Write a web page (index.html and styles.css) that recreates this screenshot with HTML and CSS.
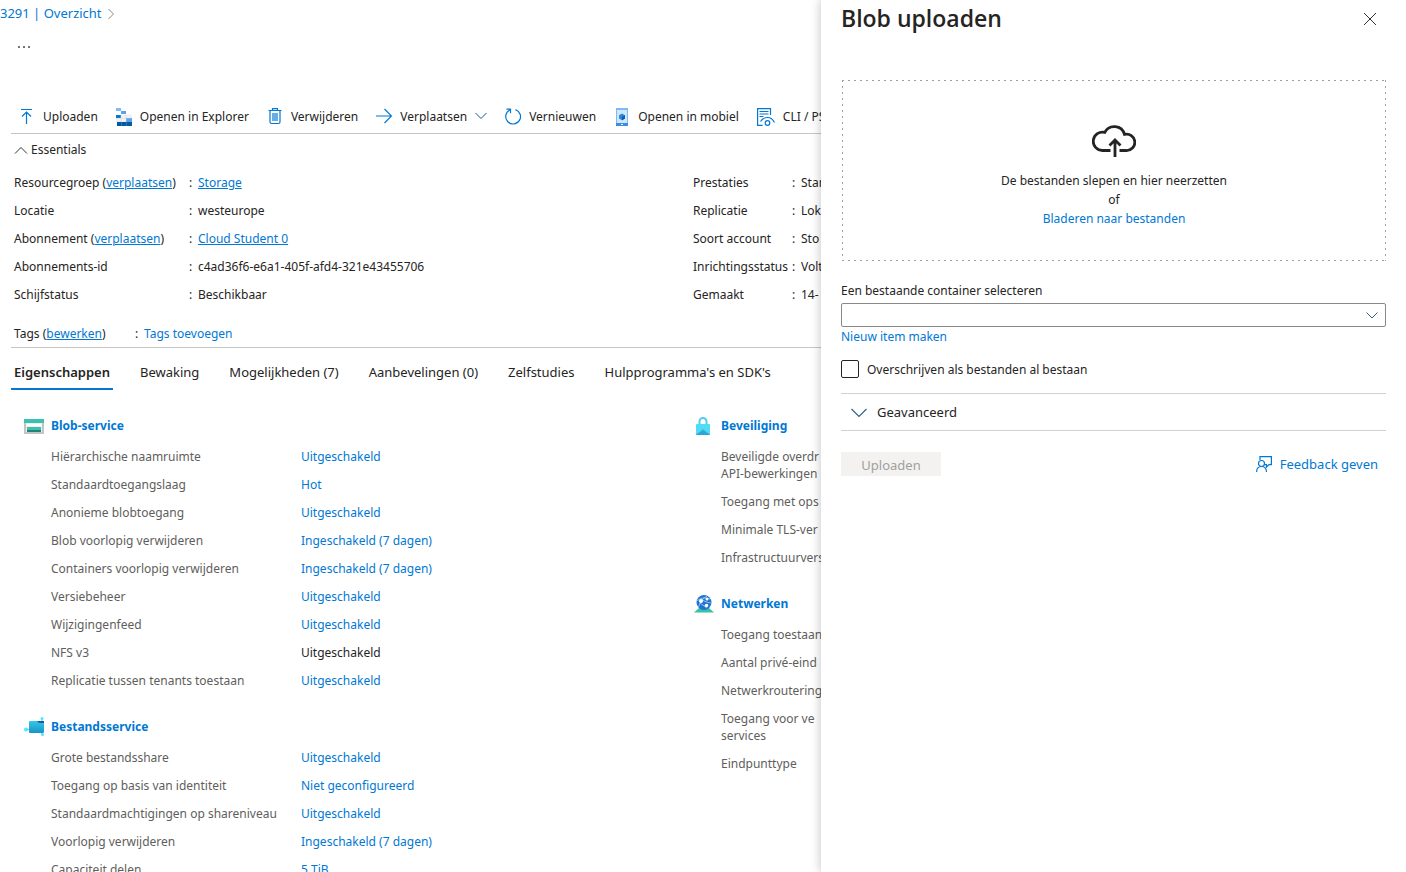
FILE: index.html
```html
<!DOCTYPE html>
<html lang="nl">
<head>
<meta charset="utf-8">
<title>Blob uploaden</title>
<link rel="stylesheet" href="styles.css">
</head>
<body>
<main class="blade">
  <nav class="breadcrumb" aria-label="Kruimelpad">
    <a href="#">3291 | Overzicht</a>
    <svg width="8" height="12" viewBox="0 0 8 12" fill="none" stroke="#8a8a8a"><path d="M.5 1l5 5-5 5"/></svg>
  </nav>
  <button class="more" type="button" aria-label="Meer">
    <svg width="14" height="4" viewBox="0 0 14 4" fill="#797775"><path d="M1 2h2v2H1zM6 2h2v2H6zM11 2h2v2h-2z"/></svg>
  </button>

  <div class="toolbar" role="toolbar">
    <button type="button"><svg class="icon" viewBox="0 0 16 18" fill="none" stroke="#0078d4"><path d="M2 1.500h11M7.500 16V4M3 8.500L7.500 4 12 8.500" stroke-width="1.2"/></svg>Uploaden</button>
    <button type="button"><svg class="icon" viewBox="0 0 16 18"><path fill="#83b9f9" d="M0 0h5v3H0z"/><path fill="#5ea0ef" d="M5 3h5v3H5zM10 10h6v4h-6z"/><path fill="#0078d4" d="M0 7h5v3H0z"/><path fill="#f2f2f2" stroke="#ddd" stroke-width=".5" d="M5 7h5v3H5zM10 7h5v3h-5zM0 10.500h5v3H0zM5 10.500h5v3H5z"/><path fill="#005ba1" d="M1 14h15v4H1z"/><path stroke="#3b8bc9" stroke-width=".6" d="M5.500 14v4M10.500 14v4"/></svg>Openen in Explorer</button>
    <button type="button"><svg class="icon" viewBox="0 0 16 18" fill="none" stroke="#0078d4" stroke-width="1.200"><path d="M1.500 2.500h13M5.500 2.500V.6h5v1.900M3 2.500V14q0 1.500 1.500 1.500h7q1.500 0 1.500-1.500V2.500M6 5v8M8 5v8M10 5v8"/></svg>Verwijderen</button>
    <button type="button"><svg class="icon" viewBox="0 0 16 18" fill="none" stroke="#0078d4" stroke-width="1.200"><path d="M0 8h15.500M8.500 1l7 7-7 7"/></svg>Verplaatsen<svg class="chevron" viewBox="0 0 12 8" fill="none" stroke="#0f5a9c"><path d="M.5 0L6 5.500 11.500 0"/></svg></button>
    <button type="button"><svg class="icon" viewBox="0 0 16 18" fill="none" stroke="#0078d4" stroke-width="1.200"><path d="M10.500 1.600A7.400 7.400 0 1 1 4.800 2M1.500 1.200h4v4"/></svg>Vernieuwen</button>
    <button type="button"><svg class="icon" viewBox="0 0 16 18"><path fill="#cfe6fb" d="M2 0h12v18H2z"/><path fill="#7fb9f2" d="M2 0h12v2H2zM2 2h1v14H2zM13 2h1v14h-1z"/><path fill="#3a8ee0" d="M2 15h12v3H2z"/><path fill="#fff" d="M7 16h2v1H7z"/><path fill="#2f86dd" d="M8 5.500l3 1.700v3.400l-3 1.700-3-1.700V7.200z"/><path fill="#0b5cad" d="M8 9l3-1.800v3.400l-3 1.700z"/></svg>Openen in mobiel</button>
    <button type="button"><svg class="icon wide" viewBox="0 0 18 18" fill="none" stroke="#0078d4" stroke-width="1.200"><path d="M13.500 7V.6H.6v16.800h5M2.500 3.500h9M2.500 6h9M2.500 8.500h4M3.500 13.500Q6 9.500 10.500 9.500t7 5"/><circle cx="10.500" cy="15" r="2.300" fill="#fff"/></svg>CLI / PS</button>
  </div>

  <button class="essentials-toggle" type="button"><svg width="14" height="8" viewBox="0 0 14 8" fill="none" stroke="#323130"><path d="M1 7.500l6-6 6 6"/></svg>Essentials</button>

  <div class="essentials">
    <dl>
      <div><dt>Resourcegroep (<a href="#">verplaatsen</a>)</dt><dd><a href="#">Storage</a></dd></div>
      <div><dt>Locatie</dt><dd>westeurope</dd></div>
      <div><dt>Abonnement (<a href="#">verplaatsen</a>)</dt><dd><a href="#">Cloud Student 0</a></dd></div>
      <div><dt>Abonnements-id</dt><dd>c4ad36f6-e6a1-405f-afd4-321e43455706</dd></div>
      <div><dt>Schijfstatus</dt><dd>Beschikbaar</dd></div>
    </dl>
    <dl class="narrow">
      <div><dt>Prestaties</dt><dd>Stan</dd></div>
      <div><dt>Replicatie</dt><dd>Lok</dd></div>
      <div><dt>Soort account</dt><dd>Sto</dd></div>
      <div><dt>Inrichtingsstatus</dt><dd>Volt</dd></div>
      <div><dt>Gemaakt</dt><dd>14-</dd></div>
    </dl>
  </div>
  <dl class="tags">
    <div><dt>Tags (<a href="#">bewerken</a>)</dt><dd><a class="plain" href="#">Tags toevoegen</a></dd></div>
  </dl>

  <div class="tabs" role="tablist">
    <button type="button" role="tab" aria-selected="true">Eigenschappen</button>
    <button type="button" role="tab">Bewaking</button>
    <button type="button" role="tab">Mogelijkheden (7)</button>
    <button type="button" role="tab">Aanbevelingen (0)</button>
    <button type="button" role="tab">Zelfstudies</button>
    <button type="button" role="tab">Hulpprogramma's en SDK's</button>
  </div>

  <div class="properties">
    <div class="column">
      <section>
        <h2><svg viewBox="0 0 20 20"><path fill="#c4c4c4" d="M0 4h20v15H0z"/><path fill="#efefef" d="M2 7h16v10H2z"/><path fill="#37c2b1" d="M0 4h20v4H0zM3 12h14v3H3z"/><path fill="#fff" d="M3 9h14v2H3z"/><path fill="#258277" d="M3 15h14v2H3z"/></svg><a href="#">Blob-service</a></h2>
        <dl>
          <div><dt>Hiërarchische naamruimte</dt><dd><a href="#">Uitgeschakeld</a></dd></div>
          <div><dt>Standaardtoegangslaag</dt><dd><a href="#">Hot</a></dd></div>
          <div><dt>Anonieme blobtoegang</dt><dd><a href="#">Uitgeschakeld</a></dd></div>
          <div><dt>Blob voorlopig verwijderen</dt><dd><a href="#">Ingeschakeld (7 dagen)</a></dd></div>
          <div><dt>Containers voorlopig verwijderen</dt><dd><a href="#">Ingeschakeld (7 dagen)</a></dd></div>
          <div><dt>Versiebeheer</dt><dd><a href="#">Uitgeschakeld</a></dd></div>
          <div><dt>Wijzigingenfeed</dt><dd><a href="#">Uitgeschakeld</a></dd></div>
          <div><dt>NFS v3</dt><dd>Uitgeschakeld</dd></div>
          <div><dt>Replicatie tussen tenants toestaan</dt><dd><a href="#">Uitgeschakeld</a></dd></div>
        </dl>
      </section>
      <section>
        <h2><svg viewBox="0 0 20 20"><defs><linearGradient id="folder" x2="0" y2="1"><stop stop-color="#32c8ea"/><stop offset="1" stop-color="#1a94c4"/></linearGradient></defs><path stroke="#50c8e8" d="M2 13.500h4M18 3v16"/><path fill="#155ea1" d="M13 5h7v4h-7z"/><path fill="url(#folder)" d="M6 5h7l2 2h5v9q0 1-1 1H6q-1 0-1-1V6q0-1 1-1z"/><g fill="#50e6ff"><circle cx="2" cy="13.500" r="2"/><circle cx="18" cy="2.500" r="1.500"/><circle cx="18.500" cy="18.500" r="1.500"/></g></svg><a href="#">Bestandsservice</a></h2>
        <dl>
          <div><dt>Grote bestandsshare</dt><dd><a href="#">Uitgeschakeld</a></dd></div>
          <div><dt>Toegang op basis van identiteit</dt><dd><a href="#">Niet geconfigureerd</a></dd></div>
          <div><dt>Standaardmachtigingen op shareniveau</dt><dd><a href="#">Uitgeschakeld</a></dd></div>
          <div><dt>Voorlopig verwijderen</dt><dd><a href="#">Ingeschakeld (7 dagen)</a></dd></div>
          <div><dt>Capaciteit delen</dt><dd><a href="#">5 TiB</a></dd></div>
        </dl>
      </section>
    </div>
    <div class="column">
      <section>
        <h2><svg viewBox="0 0 20 20"><path fill="none" stroke="#50cdea" stroke-width="2" d="M5.500 9V6.500a3.500 3.500 0 0 1 7 0V9"/><rect x="2" y="9" width="14" height="11" rx="1" fill="#50dcf5"/><path fill="#32bedd" d="M2 20l7-6 7 6z"/><path fill="#2fa6d0" d="M2 19.500l7-4 7 4-1 .5H3z"/></svg><a href="#">Beveiliging</a></h2>
        <dl>
          <div><dt>Beveiligde overdr<br>API-bewerkingen</dt></div>
          <div><dt>Toegang met ops</dt></div>
          <div><dt>Minimale TLS-ver</dt></div>
          <div><dt>Infrastructuurvers</dt></div>
        </dl>
      </section>
      <section>
        <h2><svg viewBox="0 0 20 20"><path fill="#37c2a5" d="M5 15h10l5 4.500H0z"/><circle cx="10" cy="9.500" r="7.500" fill="#1c75d0"/><path fill="none" stroke="#a9cff5" stroke-width=".8" d="M3 8q5-5 13-2M4.500 14Q7 6 13 3M8 7q6 3 9 3M6 10l7 5"/><circle cx="7" cy="8" r="2" fill="#fff"/><circle cx="13" cy="6" r="1.500" fill="#fff"/><circle cx="12.500" cy="12.500" r="1.800" fill="#fff"/></svg><a href="#">Netwerken</a></h2>
        <dl>
          <div><dt>Toegang toestaan</dt></div>
          <div><dt>Aantal privé-eind</dt></div>
          <div><dt>Netwerkroutering</dt></div>
          <div><dt>Toegang voor ve<br>services</dt></div>
          <div><dt>Eindpunttype</dt></div>
        </dl>
      </section>
    </div>
  </div>
</main>

<aside class="panel" aria-labelledby="panel-title">
  <header>
    <h1 id="panel-title">Blob uploaden</h1>
    <button class="close" type="button" aria-label="Sluiten"><svg width="14" height="14" viewBox="0 0 14 14" fill="none" stroke="#323130"><path d="M1 1l12 12M13 1L1 13"/></svg></button>
  </header>
  <form>
    <div class="dropzone">
      <svg width="44" height="34" viewBox="0 0 44 34" fill="none" stroke="#252423" stroke-width="2.800"><path d="M18.500 26.500H10.500A9.200 9.200 0 1 1 12.800 8.400A10.600 10.600 0 0 1 32.500 10.400A8.200 8.200 0 1 1 34 26.500H27.500"/><path d="M23 33V16M17.500 21.500L23 16l5.500 5.500"/></svg>
      <p>De bestanden slepen en hier neerzetten</p>
      <p>of</p>
      <a href="#">Bladeren naar bestanden</a>
    </div>
    <label class="field-label" for="container">Een bestaande container selecteren</label>
    <div class="select">
      <select id="container"><option></option></select>
      <svg class="chevron" viewBox="0 0 12 8" fill="none" stroke="#35618c"><path d="M.5 1.500L6 7 11.500 1.500"/></svg>
    </div>
    <a class="new-item" href="#">Nieuw item maken</a>
    <label class="check"><input type="checkbox">Overschrijven als bestanden al bestaan</label>
    <button class="advanced" type="button"><svg width="16" height="10" viewBox="0 0 16 10" fill="none" stroke="#35618c" stroke-width="1.200"><path d="M.5 1L8 8.500 15.500 1"/></svg>Geavanceerd</button>
    <div class="actions">
      <button class="submit" type="submit" disabled>Uploaden</button>
      <a href="#"><svg width="16" height="16" viewBox="0 0 16 16" fill="none" stroke="#0078d4" stroke-width="1.200"><path d="M4 4V.6h11.400v8H13l-2.500 2.500V8.600H9"/><circle cx="5.500" cy="7.500" r="3"/><path d="M.6 16q0-5.500 4.900-5.500t5 5.500"/></svg>Feedback geven</a>
    </div>
  </form>
</aside>
</body>
</html>
```
FILE: styles.css
```css
* { box-sizing: border-box; }

body {
  display: flex;
  height: 100vh;
  margin: 0;
  font: 12px/17px "Noto Sans", "Open Sans", sans-serif;
  color: #252423;
  background: #fff;
}

h1, h2, p, dl, dd { margin: 0; }

a { color: #0078d4; text-decoration: none; }

button {
  padding: 0;
  border: 0;
  background: none;
  font: inherit;
  color: inherit;
  display: flex;
  align-items: center;
}

svg { flex: none; display: block; }

.blade {
  flex: 1;
  min-width: 0;
  overflow: hidden;
  white-space: nowrap;
}

.breadcrumb {
  display: flex;
  align-items: center;
  gap: 6px;
  padding-top: 5px;
  font-size: 13px;
}

.more { margin: 22px 0 0 17px; }

.toolbar {
  display: flex;
  align-items: center;
  gap: 18px;
  height: 36px;
  margin: 50px 0 0 11px;
  padding: 2px 0 0 8px;
  border-bottom: 1px solid #c8c6c4;
}

.toolbar button { gap: 8px; }

.icon { width: 16px; height: 18px; }
.icon.wide { width: 18px; }
.chevron { width: 12px; height: 8px; }

.essentials-toggle { gap: 3px; margin: 7px 0 16px 14px; }

.essentials {
  display: grid;
  grid-template-columns: 679px 1fr;
  padding-left: 14px;
}

.essentials dl { display: grid; gap: 11px; }
.essentials dl > div, .tags > div { display: flex; }
.essentials dt { width: 175px; }
.essentials .narrow dt { width: 99px; }
.essentials dd::before, .tags dd::before { content: ":"; display: inline-block; width: 9px; }
.essentials a, .tags a { text-decoration: underline; }
.tags a.plain { text-decoration: none; }

.tags {
  margin: 22px 0 0 11px;
  padding: 0 3px 5px;
  border-bottom: 1px solid #c8c6c4;
}
.tags dt { width: 121px; }

.tabs {
  display: flex;
  gap: 24px;
  padding: 6px 0 0 11px;
  font-size: 13px;
}

.tabs button {
  height: 36px;
  padding: 2px 3px 0;
  border-bottom: 2px solid transparent;
}
.tabs [aria-selected="true"] { font-weight: 600; border-color: #0078d4; }

.properties {
  display: grid;
  grid-template-columns: 670px 1fr;
  padding: 25px 0 0 24px;
}

.column { display: grid; gap: 27px; align-content: start; }

.column h2 {
  display: flex;
  align-items: center;
  gap: 7px;
  height: 20px;
  margin-bottom: 13px;
  font-size: 12px;
  font-weight: 700;
}

.column h2 svg { width: 20px; height: 20px; }
.column dl { display: grid; gap: 11px; padding-left: 27px; }
.column dl > div { display: flex; }
.column dt { width: 250px; color: #605e5c; }

.panel {
  position: relative;
  width: 585px;
  padding: 0 20px;
  background: #fff;
  box-shadow: 0 0 10px rgba(0, 0, 0, .25);
}

.panel header {
  display: flex;
  align-items: center;
  justify-content: space-between;
  height: 38px;
}

.panel h1 { font: 600 23px/32px "Open Sans", "Noto Sans", sans-serif; padding-bottom: 2px; }
.close { margin-right: 9px; }

.dropzone {
  --dash: #a19f9d 0 2px, transparent 2px 6px;
  display: flex;
  flex-direction: column;
  align-items: center;
  margin: 42px 0 0 1px;
  padding: 44px 0 33px;
  background:
    repeating-linear-gradient(90deg, var(--dash)) top / 100% 1px no-repeat,
    repeating-linear-gradient(90deg, var(--dash)) bottom / 100% 1px no-repeat,
    repeating-linear-gradient(var(--dash)) left / 1px 100% no-repeat,
    repeating-linear-gradient(var(--dash)) right / 1px 100% no-repeat;
  line-height: 19px;
}
.dropzone svg { margin-bottom: 13px; }

.field-label { display: block; margin: 21px 0 4px; }

.select { display: grid; align-items: center; }
.select > * { grid-area: 1 / 1; }
.select select {
  width: 100%;
  height: 24px;
  border: 1px solid #8a8886;
  border-radius: 2px;
  background: #fff;
  appearance: none;
}
.select .chevron { justify-self: end; margin-right: 8px; pointer-events: none; }

.new-item { display: block; margin-top: 1px; }

.check {
  display: flex;
  align-items: center;
  gap: 8px;
  margin: 15px 0;
}
.check input {
  width: 18px;
  height: 18px;
  margin: 0;
  border: 1px solid #252423;
  border-radius: 2px;
  appearance: none;
}

.advanced {
  gap: 10px;
  width: 100%;
  height: 38px;
  padding: 1px 0 0 10px;
  border: solid #d2d0ce;
  border-width: 1px 0;
  font-size: 13px;
}

.actions {
  display: flex;
  align-items: center;
  justify-content: space-between;
  margin-top: 21px;
  padding-right: 8px;
  font-size: 13px;
}
.actions a { display: flex; align-items: center; gap: 8px; }

.submit {
  justify-content: center;
  width: 100px;
  height: 24px;
  padding-top: 2px;
  background: #f3f2f1;
  color: #a19f9d;
}
```
